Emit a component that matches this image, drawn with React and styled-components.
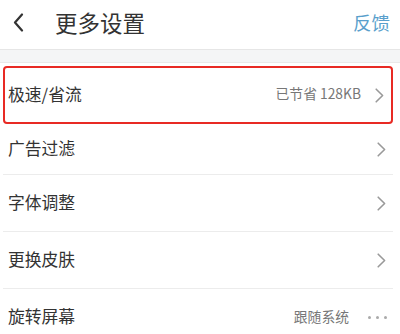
import React from "react";
import styled, { createGlobalStyle } from "styled-components";

const Global = createGlobalStyle`
  html, body { margin: 0; padding: 0; background: #fff; }
  body { font-family: "Noto Sans CJK SC", "Noto Sans", sans-serif; }
`;

const Page = styled.div`
  width: 400px;
  height: 334px;
  overflow: hidden;
  background: #fff;
  display: flex;
  flex-direction: column;
  & > * { flex-shrink: 0; }
`;

const Header = styled.div`
  height: 49px;
  display: flex;
  align-items: center;
  padding: 0 10px 0 13px;
  box-sizing: border-box;
`;

const BackButton = styled.div`
  width: 16px;
  height: 24px;
  display: flex;
  align-items: center;
  margin-right: 26px;
  margin-top: -4px;
`;

const Title = styled.div`
  flex: 1;
  font-size: 22.5px;
  color: #333;
  line-height: 1;
  margin-top: -4px;
`;

const Feedback = styled.div`
  font-size: 18.5px;
  color: #5a9fcc;
  line-height: 1;
  margin-top: -4px;
`;

const Band = styled.div`
  height: 12px;
  background: #f4f5f6;
  border-top: 1px solid #e6e6e6;
  border-bottom: 1px solid #e9e9e9;
`;

const List = styled.div`
  display: flex;
  flex-direction: column;
  padding: 0 7px 0 3px;
  & > * { flex-shrink: 0; }
`;

const Row = styled.div`
  display: flex;
  align-items: center;
  box-sizing: border-box;
  height: ${(p) => p.$h}px;
  padding: 0 7px 0 ${(p) => (p.$highlight ? 3 : 5)}px;
  margin-top: ${(p) => (p.$highlight ? 3 : 0)}px;
  border: ${(p) => (p.$highlight ? "2px solid #e82a24" : "none")};
  border-radius: ${(p) => (p.$highlight ? "4px" : "0")};
  border-bottom: ${(p) =>
    p.$highlight ? "2px solid #e82a24" : p.$divider ? "1.5px solid #ececec" : "none"};
`;

const Label = styled.div`
  flex: 1;
  font-size: 16.8px;
  color: #333;
  line-height: 1;
  margin-top: -2px;
`;

const Value = styled.div`
  font-size: 13.8px;
  color: #777;
  line-height: 1;
  margin-right: ${(p) => p.$gap}px;
  margin-top: -2px;
`;

const Chevron = ({ color = "#999", w = 9, h = 15, sw = 1.6 }) => (
  <svg width={w} height={h} viewBox="0 0 9 15" fill="none">
    <path d="M1.2 1.2 L7.6 7.5 L1.2 13.8" stroke={color} strokeWidth={sw} strokeLinecap="round" strokeLinejoin="round" />
  </svg>
);

const Back = () => (
  <svg width="11" height="19" viewBox="0 0 11 19" fill="none">
    <path d="M9 1.5 L2 9.5 L9 17.5" stroke="#333" strokeWidth="2.2" strokeLinecap="round" strokeLinejoin="round" />
  </svg>
);

const Dots = styled.div`
  display: flex;
  gap: 5px;
  align-items: center;
  margin-right: -1px;
  span {
    width: 3px;
    height: 3px;
    border-radius: 50%;
    background: #aaa;
  }
`;

export default function App() {
  return (
    <Page>
      <Global />
      <Header>
        <BackButton><Back /></BackButton>
        <Title>更多设置</Title>
        <Feedback>反馈</Feedback>
      </Header>
      <Band />
      <List>
        <Row $highlight $h={58}>
          <Label>极速/省流</Label>
          <Value $gap={14}>已节省 128KB</Value>
          <Chevron />
        </Row>
        <Row $h={51} $divider>
          <Label>广告过滤</Label>
          <Chevron />
        </Row>
        <Row $h={57} $divider>
          <Label>字体调整</Label>
          <Chevron />
        </Row>
        <Row $h={57} $divider>
          <Label>更换皮肤</Label>
          <Chevron />
        </Row>
        <Row $h={57}>
          <Label>旋转屏幕</Label>
          <Value $gap={19}>跟随系统</Value>
          <Dots><span /><span /><span /></Dots>
        </Row>
      </List>
    </Page>
  );
}
